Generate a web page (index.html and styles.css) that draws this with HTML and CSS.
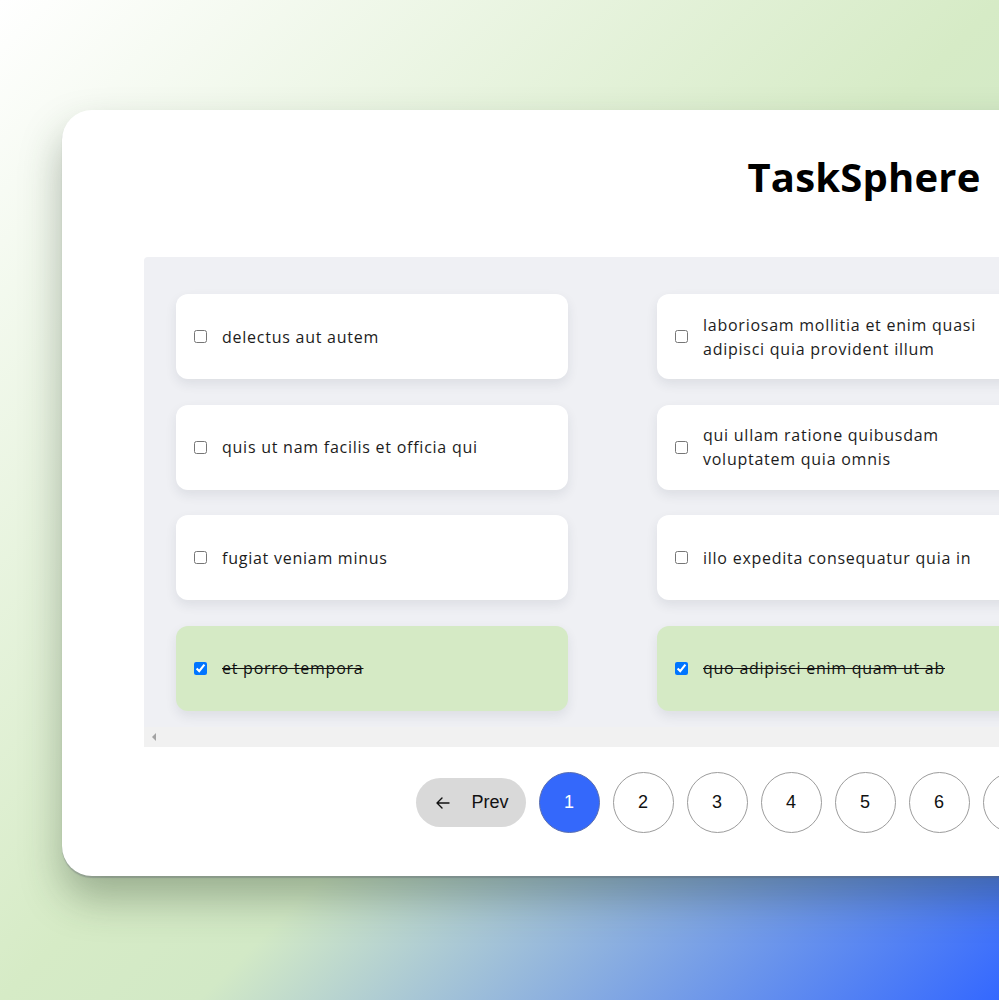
FILE: index.html
```html
<!DOCTYPE html>
<html lang="en">
<head>
<meta charset="utf-8">
<title>TaskSphere</title>
<link rel="stylesheet" href="styles.css">
</head>
<body>
<div class="stage">
  <main class="app">
    <h1 class="title">TaskSphere</h1>
    <section class="board">
      <div class="grid">
        <label class="task"><input type="checkbox"><span class="task-text">delectus aut autem</span></label>
        <label class="task"><input type="checkbox"><span class="task-text">quis ut nam facilis et officia qui</span></label>
        <label class="task"><input type="checkbox"><span class="task-text">fugiat veniam minus</span></label>
        <label class="task done"><input type="checkbox" checked><span class="task-text">et porro tempora</span></label>
        <label class="task"><input type="checkbox"><span class="task-text">laboriosam mollitia et enim quasi adipisci quia provident illum</span></label>
        <label class="task"><input type="checkbox"><span class="task-text">qui ullam ratione quibusdam voluptatem quia omnis</span></label>
        <label class="task"><input type="checkbox"><span class="task-text">illo expedita consequatur quia in</span></label>
        <label class="task done"><input type="checkbox" checked><span class="task-text">quo adipisci enim quam ut ab</span></label>
        <label class="task"><input type="checkbox"><span class="task-text">molestiae perspiciatis ipsa</span></label>
        <label class="task done"><input type="checkbox" checked><span class="task-text">illo est ratione doloremque quia maiores aut</span></label>
      </div>
      <div class="hscroll"><span class="hscroll-arrow"></span></div>
    </section>
    <nav class="pager">
      <button class="pill"><svg class="pill-icon" width="14" height="12" viewBox="0 0 14 12"><path d="M13 6H1.5M6 1 1 6l5 5" fill="none" stroke="#111" stroke-width="1.4" stroke-linecap="round" stroke-linejoin="round"/></svg><span>Prev</span></button>
      <button class="page active">1</button>
      <button class="page">2</button>
      <button class="page">3</button>
      <button class="page">4</button>
      <button class="page">5</button>
      <button class="page">6</button>
      <button class="page">7</button>
      <button class="page">8</button>
      <button class="page">9</button>
      <button class="pill pill-next"><span>Next</span><svg class="pill-icon" width="14" height="12" viewBox="0 0 14 12"><path d="M1 6h11.5M8 1l5 5-5 5" fill="none" stroke="#111" stroke-width="1.4" stroke-linecap="round" stroke-linejoin="round"/></svg></button>
    </nav>
  </main>
</div>
</body>
</html>
```

FILE: styles.css
```css
html, body {
  margin: 0;
  padding: 0;
  height: 1000px;
  overflow: hidden;
}

body {
  font-family: "Open Sans", "Noto Sans", sans-serif;
  background: linear-gradient(135deg, #ffffff 0%, #d6ebc6 50%, #d2e9c6 60%, #3468ff 100%);
  color: #1a1a1a;
}

.stage {
  padding: 110px 0 0 62px;
}

.app {
  width: 1604px;
  box-sizing: border-box;
  background: #ffffff;
  border-radius: 30px;
  padding: 39px 82px 43px;
  box-shadow: 0 22px 40px rgba(40, 60, 40, 0.35), 0 2px 1px rgba(120, 120, 140, 0.35);
}

.title {
  margin: 0 0 52px;
  text-align: center;
  font-size: 40px;
  line-height: 56px;
  font-weight: 700;
  color: #000;
  letter-spacing: 0.2px;
}

.board {
  background: #eff0f4;
  border-radius: 4px 4px 0 0;
}

.grid {
  display: grid;
  grid-template-rows: repeat(4, 85px);
  grid-auto-flow: column;
  grid-auto-columns: 392px;
  column-gap: 89px;
  row-gap: 25.5px;
  padding: 37px 32px 16.5px;
}

.task {
  display: flex;
  align-items: center;
  gap: 15px;
  padding: 0 30px 0 18px;
  background: #ffffff;
  border-radius: 12px;
  box-shadow: 0 5px 12px rgba(30, 40, 70, 0.09);
  font-size: 16px;
  line-height: 24px;
  letter-spacing: 0.75px;
  color: #1c1c1c;
}

.task input {
  margin: 0;
  width: 13px;
  height: 13px;
  flex: none;
}

.task.done {
  background: #d5eac5;
}

.task.done .task-text {
  text-decoration: line-through;
  color: #111;
}

.hscroll {
  height: 20px;
  background: #f1f1f1;
  display: flex;
  align-items: center;
  padding-left: 8px;
}

.hscroll-arrow {
  width: 0;
  height: 0;
  border-top: 4px solid transparent;
  border-bottom: 4px solid transparent;
  border-right: 4px solid #a3a3a3;
}

.pager {
  display: flex;
  justify-content: center;
  align-items: center;
  gap: 13px;
  margin-top: 25px;
}

.pager button {
  font-family: "Liberation Sans", Arial, sans-serif;
  font-size: 18px;
  color: #111;
  cursor: pointer;
}

.pill {
  display: flex;
  align-items: center;
  gap: 21px;
  height: 49px;
  padding: 0 17px 0 20px;
  border: none;
  border-radius: 25px;
  background: #d9d9d9;
}

.pill-next {
  padding: 0 17px 0 18px;
}

.pill-icon {
  flex: none;
}

.page {
  width: 61px;
  height: 61px;
  border-radius: 50%;
  border: 1px solid #9c9c9c;
  background: #ffffff;
  padding: 0;
}

.page.active {
  background: #3468fb;
  border-color: #5a6fb0;
  color: #ffffff;
}
```
